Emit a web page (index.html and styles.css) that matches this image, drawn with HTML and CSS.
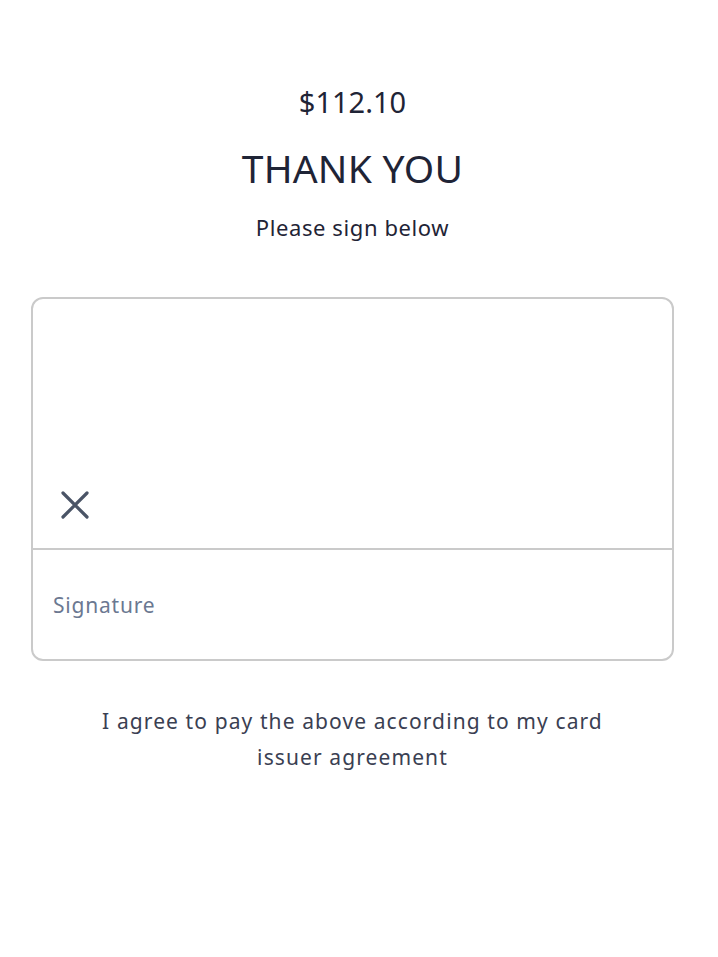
FILE: index.html
```html
<!DOCTYPE html>
<html>
<head>
<meta charset="utf-8">
<link rel="stylesheet" href="styles.css">
</head>
<body>
<main class="page">
  <div class="amount">$112.10</div>
  <h1 class="title">THANK YOU</h1>
  <p class="subtitle">Please sign below</p>
  <section class="card">
    <div class="pad">
      <button class="clear" aria-label="Clear">
        <svg width="30" height="30" viewBox="0 0 30 30"><path d="M3 3 L27 27 M27 3 L3 27" stroke="#4a5466" stroke-width="3.2" stroke-linecap="round" fill="none"/></svg>
      </button>
    </div>
    <div class="label">Signature</div>
  </section>
  <p class="agree">I agree to pay the above according to my card<br>issuer agreement</p>
</main>
</body>
</html>
```
FILE: styles.css
```css
html, body { margin: 0; padding: 0; background: #fff; }
body { font-family: "Noto Sans", "Open Sans", sans-serif; color: #1f2436; }
.page { width: 643px; margin-left: 31px; display: flex; flex-direction: column; align-items: center; padding-top: 82px; }
.amount { font-size: 29px; line-height: 40px; }
.title { font-size: 39px; font-weight: 400; margin: 20px 0 0; line-height: 52px; letter-spacing: 0.2px; }
.subtitle { font-size: 22px; margin: 18px 0 0; line-height: 30px; letter-spacing: 0.6px; }
.card { align-self: stretch; margin-top: 55px; border: 2px solid #cacaca; border-radius: 12px; height: 364px; box-sizing: border-box; display: flex; flex-direction: column; }
.pad { height: 251px; border-bottom: 2px solid #cacaca; display: flex; align-items: flex-end; padding: 0 0 28px 27px; box-sizing: border-box; }
.clear { background: none; border: 0; padding: 0; width: 30px; height: 30px; cursor: pointer; }
.clear svg { display: block; }
.label { padding: 40px 0 0 20px; font-size: 21px; color: #6b7891; line-height: 30px; letter-spacing: 0.8px; }
.agree { margin: 42px 0 0; text-align: center; font-size: 21px; line-height: 36px; color: #3a4052; letter-spacing: 1.1px; }
```
